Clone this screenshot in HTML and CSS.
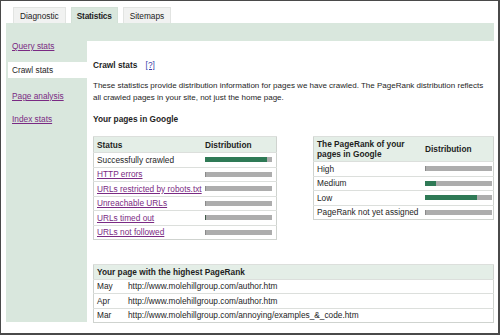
FILE: index.html
```html
<!DOCTYPE html>
<html>
<head>
<meta charset="utf-8">
<link rel="stylesheet" href="styles.css">
</head>
<body>
<div class="frame">
  <div class="tabs">
    <div class="tab">Diagnostic</div>
    <div class="tab active">Statistics</div>
    <div class="tab">Sitemaps</div>
  </div>
  <div class="panel">
    <div class="nav">
      <a class="nav-link" href="#">Query stats</a>
      <div class="nav-item selected">Crawl stats</div>
      <a class="nav-link" href="#">Page analysis</a>
      <a class="nav-link" href="#">Index stats</a>
    </div>
    <div class="content">
      <h1 class="title">Crawl stats <a class="help" href="#">[?]</a></h1>
      <p class="intro">These statistics provide distribution information for pages we have crawled. The PageRank distribution reflects all crawled pages in your site, not just the home page.</p>
      <h2 class="subtitle">Your pages in Google</h2>
      <div class="tables">
        <table class="stats status-table">
          <tr class="head"><th class="c1">Status</th><th class="d">Distribution</th></tr>
          <tr><td class="c1">Successfully crawled</td><td class="d"><div class="bar"><div class="fill green" style="width:92%"></div></div></td></tr>
          <tr><td class="c1"><a href="#">HTTP errors</a></td><td class="d"><div class="bar"><div class="fill stub"></div></div></td></tr>
          <tr><td class="c1"><a href="#">URLs restricted by robots.txt</a></td><td class="d"><div class="bar"><div class="fill stub"></div></div></td></tr>
          <tr><td class="c1"><a href="#">Unreachable URLs</a></td><td class="d"><div class="bar"><div class="fill stub"></div></div></td></tr>
          <tr><td class="c1"><a href="#">URLs timed out</a></td><td class="d"><div class="bar"><div class="fill stub dark"></div></div></td></tr>
          <tr><td class="c1"><a href="#">URLs not followed</a></td><td class="d"><div class="bar"><div class="fill stub"></div></div></td></tr>
        </table>
        <table class="stats rank-table">
          <tr class="head tall"><th class="c1">The PageRank of your pages in Google</th><th class="d">Distribution</th></tr>
          <tr><td class="c1">High</td><td class="d"><div class="bar"><div class="fill stub"></div></div></td></tr>
          <tr><td class="c1">Medium</td><td class="d"><div class="bar"><div class="fill green" style="width:16%"></div></div></td></tr>
          <tr><td class="c1">Low</td><td class="d"><div class="bar"><div class="fill green" style="width:77%"></div></div></td></tr>
          <tr><td class="c1">PageRank not yet assigned</td><td class="d"><div class="bar"><div class="fill stub"></div></div></td></tr>
        </table>
      </div>
      <table class="stats top-table">
        <tr class="head"><th colspan="2">Your page with the highest PageRank</th></tr>
        <tr><td class="m">May</td><td>http://www.molehillgroup.com/author.htm</td></tr>
        <tr><td class="m">Apr</td><td>http://www.molehillgroup.com/author.htm</td></tr>
        <tr><td class="m">Mar</td><td>http://www.molehillgroup.com/annoying/examples_&amp;_code.htm</td></tr>
      </table>
    </div>
  </div>
</div>
</body>
</html>
```
FILE: styles.css
```css
html, body {
  margin: 0;
  padding: 0;
  background: #fff;
}
body {
  font-family: "Liberation Sans", Arial, sans-serif;
  font-size: 8.3px;
  color: #1e1e1e;
}
.frame {
  width: 500px;
  height: 335px;
  box-sizing: border-box;
  border: 1px solid #4a4a4a;
  border-width: 1px 2px 2px 1px;
  padding: 6px 4px 0 5px;
  display: flex;
  flex-direction: column;
}
.tabs {
  display: flex;
  gap: 5px;
  padding-left: 7px;
  height: 16px;
}
.tab {
  height: 16px;
  line-height: 16px;
  padding: 0 6px;
  background: #f1f2f1;
  border: 1px solid #e2e4e2;
  border-bottom: none;
  box-sizing: border-box;
  color: #222;
}
.tab.active {
  background: #d9e7dd;
  border-color: #d3e1d7;
  font-weight: bold;
  padding: 0 5px;
  letter-spacing: -0.2px;
}
.panel {
  background: #d9e7dd;
  display: flex;
  padding: 18px 0 0 0;
  height: 299px;
  box-sizing: border-box;
}
.nav {
  width: 81px;
  display: flex;
  flex-direction: column;
  gap: 7px;
  padding: 0 0 0 2px;
  box-sizing: border-box;
  margin-top: -3px;
}
.nav-link, .nav-item {
  display: block;
  height: 16px;
  line-height: 16px;
  padding-left: 4px;
}
.nav-link {
  color: #7a2a83;
}
.nav-item.selected {
  background: #fff;
  color: #1e1e1e;
  margin-bottom: 3px;
}
.nav-link:first-child {
  margin-bottom: 1px;
}
.content {
  flex: 1;
  background: #fff;
  padding: 17px 0 0 6px;
  min-width: 0;
}
.title {
  margin: 0;
  font-size: 8.3px;
  font-weight: bold;
  line-height: 14px;
}
.help {
  color: #3b3fa8;
  font-weight: normal;
  margin-left: 6px;
}
.intro {
  margin: 8px 0 0;
  line-height: 12px;
  font-size: 8px;
  padding-right: 2px;
}
.subtitle {
  margin: 9px 0 0;
  font-size: 8.3px;
  font-weight: bold;
  line-height: 12px;
}
.tables {
  display: flex;
  gap: 36px;
  align-items: flex-start;
  margin-top: 11px;
}
.stats {
  border-collapse: collapse;
  border: 1px solid #cfd3cf;
}
.status-table, .rank-table {
  table-layout: fixed;
}
.stats td, .stats th {
  border-top: 1px solid #dcdfdc;
  height: 13.5px;
  padding: 0 3px;
  text-align: left;
  white-space: nowrap;
}
.stats th {
  font-weight: bold;
  background: #e4eee7;
}
.stats .c1 {
  width: 104px;
  padding: 0 4px 0 3px;
}
.stats .d {
  padding: 0;
}
.status-table .head th {
  height: 15px;
}
.stats a {
  color: #7a2a83;
}
.status-table {
  width: 184px;
}
.rank-table {
  width: 181px;
}
.rank-table .c1 {
  white-space: normal;
}
.head.tall th {
  height: 24px;
  line-height: 10px;
}
.bar {
  width: 67px;
  height: 5px;
  background: #adadad;
  display: flex;
}
.fill {
  height: 100%;
}
.fill.green {
  background: #2f7a56;
}
.fill.stub {
  width: 1px;
  background: #8a8a8a;
}
.fill.stub.dark {
  background: #3f5a48;
}
.top-table {
  width: 401px;
  margin-top: 24px;
}
.top-table .m {
  width: 25px;
}
```
